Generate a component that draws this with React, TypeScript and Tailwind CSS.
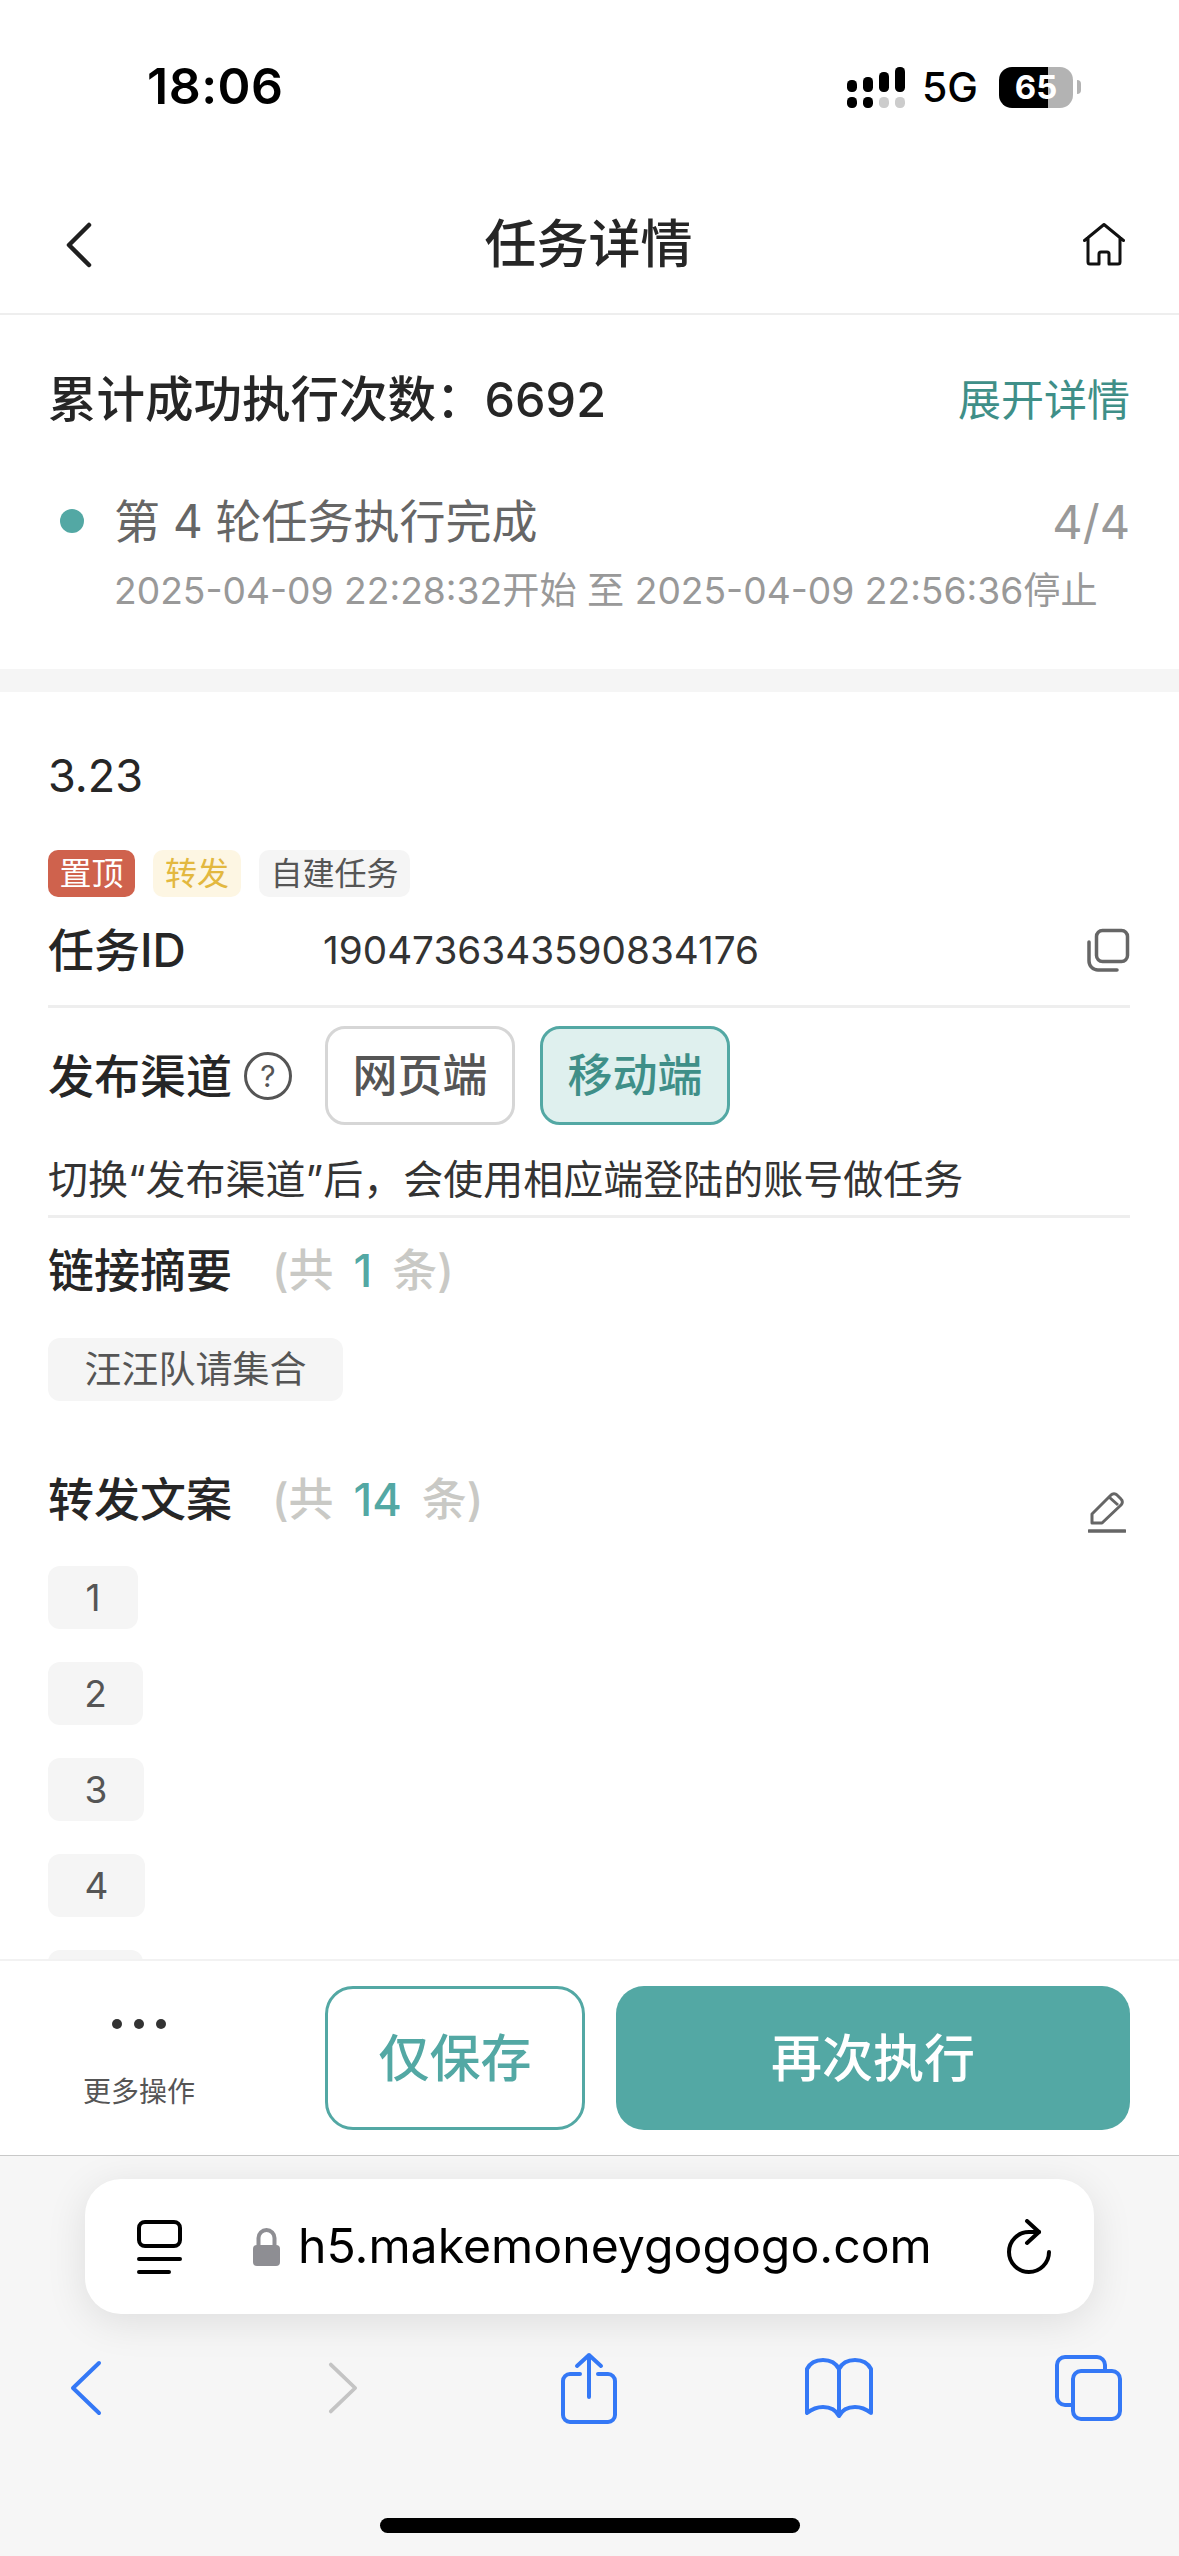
const copyItems = [
  { label: '1', width: 'w-[90px]' },
  { label: '2', width: 'w-[95px]' },
  { label: '3', width: 'w-[96px]' },
  { label: '4', width: 'w-[97px]' },
]

function SignalIcon() {
  return (
    <svg width="58" height="42" viewBox="0 0 58 42" className="block">
      <rect x="0" y="14" width="10" height="12" rx="4.5" fill="#000" />
      <rect x="16" y="11" width="10" height="15" rx="4.5" fill="#000" />
      <rect x="32" y="6" width="10" height="20" rx="4.5" fill="#000" />
      <rect x="48" y="1" width="10" height="25" rx="4.5" fill="#000" />
      <rect x="0" y="31" width="10" height="11" rx="4.5" fill="#000" />
      <rect x="16" y="31" width="10" height="11" rx="4.5" fill="#000" />
      <rect x="32" y="31" width="10" height="11" rx="4.5" fill="#ccc" />
      <rect x="48" y="31" width="10" height="11" rx="4.5" fill="#ccc" />
    </svg>
  )
}

function StatusBar() {
  return (
    <div className="flex h-[176px] items-center justify-between pb-[4px] pl-[147px] pr-[98px]">
      <span className="text-[50px] font-semibold leading-none tracking-[0.5px] text-black">
        18:06
      </span>
      <div className="mt-[2px] flex items-center">
        <SignalIcon />
        <span className="ml-[17px] text-[41px] font-medium leading-none text-black">
          5G
        </span>
        <div className="ml-[21px] flex h-[41px] w-[74px] items-center justify-center rounded-[13px] bg-[linear-gradient(90deg,#000_66%,#b3b3b3_66%)] text-[33px] font-bold leading-none text-white">
          65
        </div>
        <div className="ml-[4px] h-[14px] w-[4px] rounded-r-full bg-[#b3b3b3]" />
      </div>
    </div>
  )
}

function NavBar() {
  return (
    <div className="flex h-[139px] items-center justify-between border-b-2 border-[#eeeeee] pl-[66px] pr-[54px]">
      <svg width="26" height="46" viewBox="0 0 26 46" fill="none" stroke="#1f1f1f" strokeWidth="4.5" strokeLinecap="round" strokeLinejoin="round">
        <path d="M23 3 3 23l20 20" />
      </svg>
      <h1 className="ml-[2px] text-[52px] font-medium leading-none text-[#262626]">任务详情</h1>
      <svg width="42" height="44" viewBox="0 0 42 44" fill="none" stroke="#111" strokeWidth="3" strokeLinejoin="round" strokeLinecap="round">
        <path d="M1.500 17.500 21 1.500l19.500 16M5 14.500V39a2 2 0 0 0 2 2h9V31a2 2 0 0 1 2-2h6a2 2 0 0 1 2 2v10h9a2 2 0 0 0 2-2V14.500" />
      </svg>
    </div>
  )
}

function Summary() {
  return (
    <section className="pb-[56px] pl-[48px] pr-[49px] pt-[55px]">
      <div className="flex h-[60px] items-center justify-between">
        <span className="text-[48.5px] font-medium leading-none text-[#262626]">
          累计成功执行次数：6692
        </span>
        <span className="text-[43px] leading-none text-[#3f8f88]">展开详情</span>
      </div>
      <div className="mt-[63px] flex h-[56px] items-center">
        <span className="ml-[12px] h-[24px] w-[24px] rounded-full bg-[#53a8a4]" />
        <span className="ml-[30px] text-[46px] leading-none text-[#666666]">
          第 4 轮任务执行完成
        </span>
        <span className="ml-auto text-[47px] leading-none text-[#999999]">4/4</span>
      </div>
      <div className="mt-[20px] flex h-[44px] items-center pl-[66px] text-[37.2px] leading-none text-[#999999]">
        2025-04-09 22:28:32开始 至 2025-04-09 22:56:36停止
      </div>
    </section>
  )
}

function SectionTitle({ title, count }: { title: string; count: string }) {
  return (
    <div className="flex h-[60px] items-center">
      <span className="text-[46px] font-medium leading-none text-[#262626]">{title}</span>
      <span className="ml-[40px] text-[45px] font-medium leading-none text-[#c9c9c5] [word-spacing:8px]">
        (共 <span className="text-[#53a8a4]">{count}</span> 条)
      </span>
    </div>
  )
}

function TaskDetail() {
  return (
    <section className="pl-[48px] pr-[49px] pt-[55px]">
      <div className="flex h-[56px] items-center text-[45px] leading-none text-[#262626]">3.23</div>

      <div className="mt-[47px] flex gap-[18px] text-[32px] leading-none">
        <span className="flex h-[47px] w-[87px] items-center justify-center rounded-[10px] bg-[#cf624d] text-white">置顶</span>
        <span className="flex h-[47px] w-[88px] items-center justify-center rounded-[10px] bg-[#fdf6e3] text-[#e3b83f]">转发</span>
        <span className="flex h-[47px] w-[151px] items-center justify-center rounded-[10px] bg-[#f5f5f5] text-[#555555]">自建任务</span>
      </div>

      <div className="mt-[23px] flex h-[60px] items-center">
        <span className="w-[275px] text-[46px] font-medium leading-none text-[#262626]">任务ID</span>
        <span className="text-[38.7px] leading-none text-[#333333]">1904736343590834176</span>
        <svg className="ml-auto" width="44" height="44" viewBox="0 0 44 44" fill="none" stroke="#666" strokeWidth="3.500" strokeLinecap="round">
          <rect x="10.500" y="2.500" width="31" height="31" rx="6" />
          <path d="M3 14v19a9 9 0 0 0 9 9h19" />
        </svg>
      </div>
      <div className="mt-[25px] h-[3px] bg-[#eeeeee]" />

      <div className="mt-[18px] flex h-[99px] items-center">
        <span className="text-[46px] font-medium leading-none text-[#262626]">发布渠道</span>
        <span className="ml-[12px] flex h-[48px] w-[48px] items-center justify-center rounded-full border-[3px] border-[#555555] text-[30px] leading-none text-[#555555]">?</span>
        <span className="ml-[33px] flex h-[99px] w-[190px] items-center justify-center rounded-[20px] border-[3px] border-[#d6d6d6] text-[45px] font-medium leading-none text-[#555555]">网页端</span>
        <span className="ml-[25px] flex h-[99px] w-[190px] items-center justify-center rounded-[20px] border-[3px] border-[#53a8a4] bg-[#dff0ee] text-[45px] font-medium leading-none text-[#3f8f88]">移动端</span>
      </div>

      <div className="mt-[27px] flex h-[56px] items-center text-[40px] leading-none text-[#333333]">
        切换“发布渠道”后，会使用相应端登陆的账号做任务
      </div>
      <div className="mt-[7px] h-[3px] bg-[#eeeeee]" />

      <div className="mt-[22px]">
        <SectionTitle title="链接摘要" count="1" />
      </div>
      <div className="mt-[38px] flex h-[63px] w-[295px] items-center justify-center rounded-[12px] bg-[#f5f5f5] text-[37px] leading-none text-[#555555]">
        汪汪队请集合
      </div>

      <div className="mt-[68px] flex items-start justify-between">
        <SectionTitle title="转发文案" count="14" />
        <svg className="mr-[4px] mt-[22px]" width="38" height="42" viewBox="0 0 38 42" fill="none" stroke="#666" strokeWidth="3" strokeLinejoin="round">
          <path d="M4 32v-9L23 4a4 4 0 0 1 6 0l4 4a4 4 0 0 1 0 6L14 32Z" />
          <path d="m21 6 9 8" />
          <path d="M1 40h36" strokeWidth="3.500" strokeLinecap="round" />
        </svg>
      </div>

      <div className="mt-[33px] flex flex-col gap-[33px]">
        {copyItems.map((item) => (
          <div
            key={item.label}
            className={`flex h-[63px] shrink-0 items-center justify-center rounded-[12px] bg-[#f5f5f5] text-[37px] leading-none text-[#555555] ${item.width}`}
          >
            {item.label}
          </div>
        ))}
        {/* the fifth row is cut off by the footer, only its top edge shows */}
        <div className="h-[63px] w-[95px] shrink-0 rounded-[12px] bg-[#f5f5f5]" />
      </div>
    </section>
  )
}

function Footer() {
  return (
    <div className="flex h-[196px] shrink-0 items-start border-t-2 border-[#f2f2f2] bg-white pl-[49px] pr-[49px] pt-[25px]">
      <div className="flex w-[180px] flex-col items-center">
        <div className="mt-[33px] flex gap-[12px]">
          <span className="h-[10px] w-[10px] rounded-full bg-[#333333]" />
          <span className="h-[10px] w-[10px] rounded-full bg-[#333333]" />
          <span className="h-[10px] w-[10px] rounded-full bg-[#333333]" />
        </div>
        <span className="mt-[49px] text-[28px] leading-none text-[#555555]">更多操作</span>
      </div>
      <button className="ml-[96px] flex h-[144px] w-[260px] items-center justify-center rounded-[28px] border-[3px] border-[#53a8a4] bg-white text-[51px] font-medium leading-none text-[#53a8a4]">
        仅保存
      </button>
      <button className="ml-[31px] flex h-[144px] w-[514px] items-center justify-center rounded-[28px] bg-[#53a8a4] text-[51px] font-medium leading-none text-white">
        再次执行
      </button>
    </div>
  )
}

function SafariBar() {
  return (
    <div className="flex h-[401px] shrink-0 flex-col border-t border-[#c8c8c8] bg-[#f6f6f6]">
      <div className="mx-[85px] mt-[23px] flex h-[135px] items-center rounded-[36px] bg-white shadow-[0_8px_40px_rgba(0,0,0,0.1)]">
        <svg className="ml-[52px] shrink-0" width="45" height="54" viewBox="0 0 45 54" fill="none" stroke="#000" strokeWidth="4" strokeLinecap="round">
          <rect x="2" y="2" width="41" height="24" rx="6" />
          <path d="M2 39h41M2 52h30" />
        </svg>
        <svg className="ml-[71px] shrink-0" width="27" height="38" viewBox="0 0 27 38">
          <path d="M5.500 19v-9a8 8 0 0 1 16 0v9" fill="none" stroke="#8e8e93" strokeWidth="4" />
          <rect x="0" y="17" width="27" height="21" rx="4" fill="#8e8e93" />
        </svg>
        <span className="ml-[18px] text-[48.2px] leading-none text-black">h5.makemoneygogogo.com</span>
        <svg className="ml-auto mr-[40px] shrink-0" width="48" height="55" viewBox="0 0 48 55" fill="none" stroke="#000" strokeWidth="4" strokeLinecap="round" strokeLinejoin="round">
          <path d="m21 2 12 11-12 11" />
          <path d="M33 13H23a20 20 0 1 0 20 20" />
        </svg>
      </div>

      <div className="ml-[70px] mt-[38px] flex h-[72px] items-center">
        <svg width="32" height="56" viewBox="0 0 32 56" fill="none" stroke="#3478f6" strokeWidth="4" strokeLinecap="round" strokeLinejoin="round">
          <path d="M29 3 3 28l26 25" />
        </svg>
        <svg className="ml-[226px]" width="30" height="56" viewBox="0 0 32 56" fill="none" stroke="#c4c4c4" strokeWidth="4" strokeLinecap="round" strokeLinejoin="round">
          <path d="m3 3 26 25L3 53" />
        </svg>
        <svg className="ml-[202px]" width="58" height="72" viewBox="0 0 58 72" fill="none" stroke="#3478f6" strokeWidth="4" strokeLinecap="round" strokeLinejoin="round">
          <path d="M20 22H10a7 7 0 0 0-7 7v34a7 7 0 0 0 7 7h38a7 7 0 0 0 7-7V29a7 7 0 0 0-7-7H38" />
          <path d="M29 45V3M17 14 29 3l12 11" />
        </svg>
        <svg className="ml-[186px]" width="71" height="60" viewBox="0 0 71 60" fill="none" stroke="#3478f6" strokeWidth="4" strokeLinejoin="round">
          <path d="M3 11c3-6 9-9 16-9s13 3 16 9c3-6 9-9 16-9s13 3 16 9v44c-5-4-10-6-16-6-7 0-13 3-16 9-3-6-9-9-16-9-6 0-11 2-16 6Zm32 0v47" />
        </svg>
        <svg className="ml-[180px]" width="67" height="66" viewBox="0 0 67 66" fill="none" stroke="#3478f6" strokeWidth="4">
          <path d="M50 15v-5a8 8 0 0 0-8-8H10a8 8 0 0 0-8 8v32a8 8 0 0 0 8 8h8" />
          <rect x="18" y="16" width="47" height="48" rx="8" />
        </svg>
      </div>

      <div className="mx-auto mt-[94px] h-[15px] w-[420px] rounded-full bg-black" />
    </div>
  )
}

export default function App() {
  return (
    <div
      lang="zh-CN"
      className="flex h-[2556px] w-[1179px] flex-col overflow-hidden bg-white font-['Inter','Noto_Sans_CJK_SC',sans-serif]"
    >
      <StatusBar />
      <NavBar />
      <div className="min-h-0 flex-1 overflow-hidden">
        <Summary />
        <div className="h-[23px] bg-[#f5f5f5]" />
        <TaskDetail />
      </div>
      <Footer />
      <SafariBar />
    </div>
  )
}
